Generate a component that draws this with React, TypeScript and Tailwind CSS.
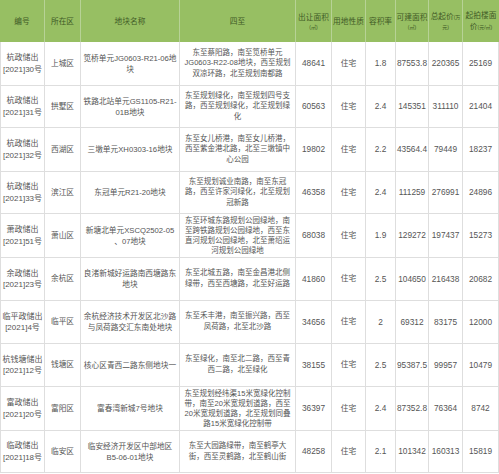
import React from "react"

const grid = "grid grid-cols-[45px_36px_99px_116px_36px_34px_30px_33px_34px_36px]"

type Row = {
  h: string
  code: string[]
  district: string
  name: string[]
  bounds: string[]
  tight?: boolean
  area: string
  use: string
  ratio: string
  build: string
  price: string
  unit: string
}

const rows: Row[] = [
  {
    h: "h-[44px]",
    code: ["杭政储出", "[2021]30号"],
    district: "上城区",
    name: ["笕桥单元JG0603-R21-06地", "块"],
    bounds: ["东至蔡阳路，南至笕桥单元", "JG0603-R22-08地块，西至规划", "双凉环路，北至规划南都路"],
    area: "48641",
    use: "住宅",
    ratio: "1.8",
    build: "87553.8",
    price: "220365",
    unit: "25169",
  },
  {
    h: "h-[42px]",
    code: ["杭政储出", "[2021]31号"],
    district: "拱墅区",
    name: ["铁路北站单元GS1105-R21-", "01B地块"],
    bounds: ["东至规划绿化，南至规划四号支", "路，西至规划绿化，北至规划绿", "化"],
    area: "60563",
    use: "住宅",
    ratio: "2.4",
    build: "145351",
    price: "311110",
    unit: "21404",
  },
  {
    h: "h-[44px]",
    code: ["杭政储出", "[2021]32号"],
    district: "西湖区",
    name: ["三墩单元XH0303-16地块"],
    bounds: ["东至女儿桥港，南至女儿桥港，", "西至紫金港北路，北至三墩镇中", "心公园"],
    area: "19802",
    use: "住宅",
    ratio: "2.2",
    build: "43564.4",
    price: "79449",
    unit: "18237",
  },
  {
    h: "h-[42px]",
    code: ["杭政储出", "[2021]33号"],
    district: "滨江区",
    name: ["东冠单元R21-20地块"],
    bounds: ["东至规划诚业南路，南至东冠", "路，西至许家河绿化，北至规划", "冠新路"],
    area: "46358",
    use: "住宅",
    ratio: "2.4",
    build: "111259",
    price: "276991",
    unit: "24896",
  },
  {
    h: "h-[44px]",
    code: ["萧政储出", "[2021]51号"],
    district: "萧山区",
    name: ["新塘北单元XSCQ2502-05", "、07地块"],
    bounds: ["东至环城东路规划公园绿地，南", "至跨铁路规划公园绿地，西至东", "直河规划公园绿地，北至萧绍运", "河规划公园绿地"],
    tight: true,
    area: "68038",
    use: "住宅",
    ratio: "1.9",
    build: "129272",
    price: "197437",
    unit: "15273",
  },
  {
    h: "h-[43px]",
    code: ["余政储出", "[2021]23号"],
    district: "余杭区",
    name: ["良渚新城好运路南西塘路东", "地块"],
    bounds: ["东至北城五路，南至金昌港北侧", "绿带，西至西塘路，北至好运路"],
    area: "41860",
    use: "住宅",
    ratio: "2.5",
    build: "104650",
    price: "216438",
    unit: "20682",
  },
  {
    h: "h-[43px]",
    code: ["临平政储出", "[2021]4号"],
    district: "临平区",
    name: ["余杭经济技术开发区北沙路", "与凤荷路交汇东南处地块"],
    bounds: ["东至禾丰港，南至振兴路，西至", "凤荷路，北至北沙路"],
    area: "34656",
    use: "住宅",
    ratio: "2",
    build: "69312",
    price: "83175",
    unit: "12000",
  },
  {
    h: "h-[43px]",
    code: ["杭钱塘储出", "[2021]12号"],
    district: "钱塘区",
    name: ["核心区青西二路东侧地块一"],
    bounds: ["东至绿化，南至北二路，西至青", "西二路，北至绿化"],
    area: "38155",
    use: "住宅",
    ratio: "2.5",
    build: "95387.5",
    price: "99957",
    unit: "10479",
  },
  {
    h: "h-[44px]",
    code: ["富政储出", "[2021]20号"],
    district: "富阳区",
    name: ["富春湾新城7号地块"],
    bounds: ["东至规划经纬渠15米宽绿化控制", "带，南至20米宽规划道路，西至", "20米宽规划道路，北至规划同叠", "路15米宽绿化控制带"],
    tight: true,
    area: "36397",
    use: "住宅",
    ratio: "2.4",
    build: "87352.8",
    price: "76364",
    unit: "8742",
  },
  {
    h: "h-[42px]",
    code: ["临政储出", "[2021]18号"],
    district: "临安区",
    name: ["临安经济开发区中部地区", "B5-06-01地块"],
    bounds: ["东至大园路绿带，南至鹤亭大", "街，西至灵鹤路，北至鹤山街"],
    area: "48258",
    use: "住宅",
    ratio: "2.1",
    build: "101342",
    price: "160313",
    unit: "15819",
  },
]

const cell = "flex flex-col items-center justify-center text-center border-r border-b border-[#dedede] whitespace-nowrap overflow-hidden"
const head = "flex flex-col items-center justify-center text-center border-r border-[#b7d296] text-[7.7px] leading-[11px] text-[#3f5a26] whitespace-nowrap"

function Lines({ lines, className }: { lines: string[]; className: string }) {
  return (
    <div className={className}>
      {lines.map((l, i) => (
        <div key={i}>{l}</div>
      ))}
    </div>
  )
}

export default function App() {
  return (
    <div
      className="w-[499px] h-[474px] bg-white overflow-hidden text-[#555555]"
      style={{ fontFamily: '"Liberation Sans", "Noto Sans CJK SC", sans-serif' }}
    >
      <div className={`${grid} h-[42px] bg-[#97bf63]`}>
        <div className={head}>编号</div>
        <div className={head}>所在区</div>
        <div className={head}>地块名称</div>
        <div className={head}>四至</div>
        <div className={head}>
          <div>出让面积</div>
          <div className="text-[5px] leading-[8px]">(㎡)</div>
        </div>
        <div className={head}>用地性质</div>
        <div className={head}>容积率</div>
        <div className={head}>
          <div>可建面积</div>
          <div className="text-[5px] leading-[8px]">(㎡)</div>
        </div>
        <div className={head}>
          <div>
            总起价<span className="text-[5px]">(万</span>
          </div>
          <div className="text-[5px] leading-[8px]">元)</div>
        </div>
        <div className={`${head} border-r-0`}>
          <div>起拍楼面</div>
          <div>
            价<span className="text-[5px]">(元/㎡)</span>
          </div>
        </div>
      </div>

      {rows.map((r) => (
        <div key={r.code.join("")} className={`${grid} ${r.h}`}>
          <Lines lines={r.code} className={`${cell} border-l text-[8px] leading-[11.5px]`} />
          <div className={`${cell} text-[7.7px]`}>{r.district}</div>
          <Lines lines={r.name} className={`${cell} text-[7.7px] leading-[11px]`} />
          <Lines
            lines={r.bounds}
            className={`${cell} text-[7.5px] ${r.tight ? "leading-[10px]" : "leading-[10.6px]"}`}
          />
          <div className={`${cell} text-[8.3px]`}>{r.area}</div>
          <div className={`${cell} text-[7.7px]`}>{r.use}</div>
          <div className={`${cell} text-[8.3px]`}>{r.ratio}</div>
          <div className={`${cell} text-[8.3px]`}>{r.build}</div>
          <div className={`${cell} text-[8.3px]`}>{r.price}</div>
          <div className={`${cell} text-[8.3px]`}>{r.unit}</div>
        </div>
      ))}
    </div>
  )
}
